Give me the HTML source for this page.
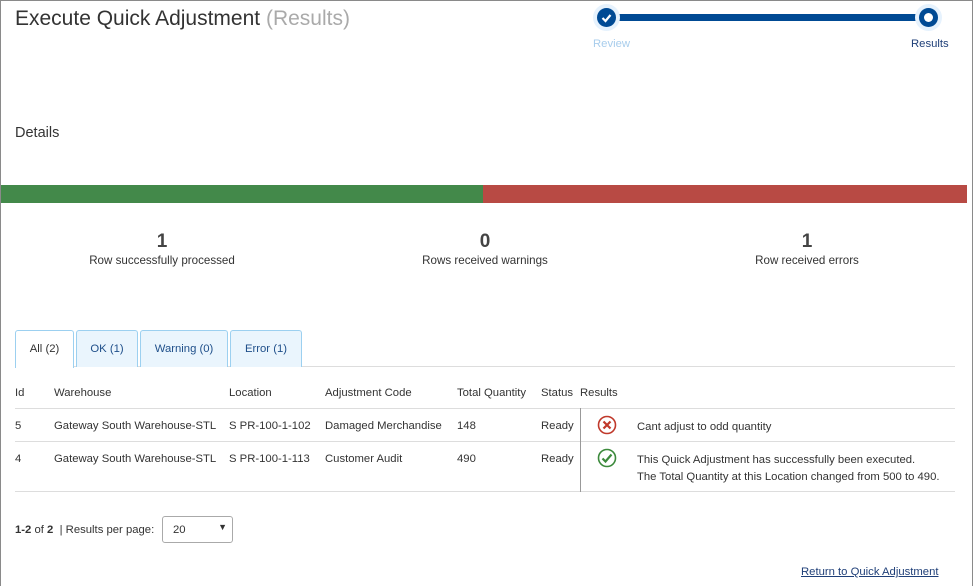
<!DOCTYPE html>
<html><head><style>
*{box-sizing:border-box}
body{margin:0;width:973px;height:586px;overflow:hidden;font-family:"Liberation Sans",sans-serif;color:#333;background:#fff}
.frame{position:absolute;left:0;top:0;width:973px;height:586px;border:1px solid #8a8a8a;border-bottom:none}
.a{position:absolute;white-space:nowrap}
.s{font-size:11.3px}
table{position:absolute;left:15px;top:380px;width:940px;border-collapse:collapse;font-size:11.3px}
td,th{text-align:left;font-weight:normal;padding:0;vertical-align:top}
.tab{position:absolute;top:330px;height:37px;border:1px solid #9cd0f0;border-bottom:none;background:#eaf5fd;font-size:11.3px;color:#1f4f8a;text-align:center;line-height:37px;border-radius:3px 3px 0 0}
</style></head><body>
<div class="frame"></div>
<div class="a" style="left:15px;top:7px;font-size:21px;color:#333">Execute Quick Adjustment <span style="color:#aaa">(Results)</span></div>
<div class="a" style="left:593px;top:4px;width:376px;height:28px">
 <div class="a" style="left:14px;top:10px;width:322px;height:7px;background:#004a94"></div>
 <div class="a" style="left:0;top:0;width:27px;height:27px;border-radius:50%;background:#e6f2fd"></div>
 <div class="a" style="left:4px;top:4px;width:19px;height:19px;border-radius:50%;background:#004a94"></div>
 <svg class="a" style="left:8px;top:9px" width="11" height="10"><path d="M1.5 5 L4.5 8 L9.5 2" stroke="#fff" stroke-width="2.2" fill="none"/></svg>
 <div class="a" style="left:322px;top:0;width:27px;height:27px;border-radius:50%;background:#e6f2fd"></div>
 <div class="a" style="left:326px;top:4px;width:19px;height:19px;border-radius:50%;background:#004a94"></div>
 <div class="a" style="left:331px;top:9px;width:9px;height:9px;border-radius:50%;background:#fff"></div>
</div>
<div class="a s" style="left:593px;top:38px;color:#a8cdec">Review</div>
<div class="a s" style="left:911px;top:38px;color:#1f3f78">Results</div>
<div class="a" style="left:15px;top:125px;font-size:14.5px">Details</div>
<div class="a" style="left:1px;top:185px;width:482px;height:18px;background:#43894a"></div>
<div class="a" style="left:483px;top:185px;width:484px;height:18px;background:#b84a44"></div>
<div class="a" style="left:62px;top:232px;width:200px;text-align:center"><div style="font-size:19px;font-weight:bold;color:#444;line-height:20px">1</div><div style="font-size:11.6px;margin-top:2px">Row successfully processed</div></div>
<div class="a" style="left:385px;top:232px;width:200px;text-align:center"><div style="font-size:19px;font-weight:bold;color:#444;line-height:20px">0</div><div style="font-size:11.6px;margin-top:2px">Rows received warnings</div></div>
<div class="a" style="left:707px;top:232px;width:200px;text-align:center"><div style="font-size:19px;font-weight:bold;color:#444;line-height:20px">1</div><div style="font-size:11.6px;margin-top:2px">Row received errors</div></div>
<div class="a" style="left:15px;top:366px;width:940px;height:1px;background:#ddd"></div>
<div class="tab" style="left:15px;width:59px;background:#fff;color:#333;height:38px">All (2)</div>
<div class="tab" style="left:76px;width:62px">OK (1)</div>
<div class="tab" style="left:140px;width:88px">Warning (0)</div>
<div class="tab" style="left:230px;width:72px">Error (1)</div>
<table>
<tr style="height:28px;border-bottom:1px solid #ddd"><th style="width:39px;padding-top:7px">Id</th><th style="width:175px;padding-top:7px">Warehouse</th><th style="width:96px;padding-top:7px">Location</th><th style="width:132px;padding-top:7px">Adjustment Code</th><th style="width:84px;padding-top:7px">Total Quantity</th><th style="width:39px;padding-top:7px">Status</th><th style="padding-top:7px" colspan="2">Results</th></tr>
<tr style="height:33px;border-bottom:1px solid #ddd"><td style="padding-top:11px">5</td><td style="padding-top:11px">Gateway South Warehouse-STL</td><td style="padding-top:11px">S PR-100-1-102</td><td style="padding-top:11px">Damaged Merchandise</td><td style="padding-top:11px">148</td><td style="padding-top:11px">Ready</td>
<td style="width:57px;border-left:1px solid #999;padding:6px 0 0 16px"><svg width="20" height="20"><circle cx="10" cy="10" r="8.5" stroke="#c0392b" stroke-width="1.6" fill="none"/><path d="M6.5 6.5L13.5 13.5M13.5 6.5L6.5 13.5" stroke="#c0392b" stroke-width="2.2"/></svg></td><td style="padding-top:12px">Cant adjust to odd quantity</td></tr>
<tr style="height:50px;border-bottom:1px solid #ddd"><td style="padding-top:11px">4</td><td style="padding-top:11px">Gateway South Warehouse-STL</td><td style="padding-top:11px">S PR-100-1-113</td><td style="padding-top:11px">Customer Audit</td><td style="padding-top:11px">490</td><td style="padding-top:11px">Ready</td>
<td style="border-left:1px solid #999;padding:6px 0 0 16px"><svg width="20" height="20"><circle cx="10" cy="10" r="8.5" stroke="#3c8a3c" stroke-width="1.6" fill="none"/><path d="M5.5 10.5L8.5 13.5L14.5 6.5" stroke="#3c8a3c" stroke-width="2.2" fill="none"/></svg></td><td style="padding-top:10px;line-height:17px">This Quick Adjustment has successfully been executed.<br>The Total Quantity at this Location changed from 500 to 490.</td></tr>
</table>
<div class="a s" style="left:15px;top:524px"><b>1-2</b> of <b>2</b> &nbsp;| Results per page:</div>
<div class="a s" style="left:162px;top:516px;width:71px;height:27px;border:1px solid #aaa;border-radius:3px;padding:7px 0 0 10px">20<span style="position:absolute;right:5px;top:5px;font-size:9px">▼</span></div>
<div class="a s" style="left:801px;top:566px;color:#1f3f78;text-decoration:underline">Return to Quick Adjustment</div>
</body></html>
